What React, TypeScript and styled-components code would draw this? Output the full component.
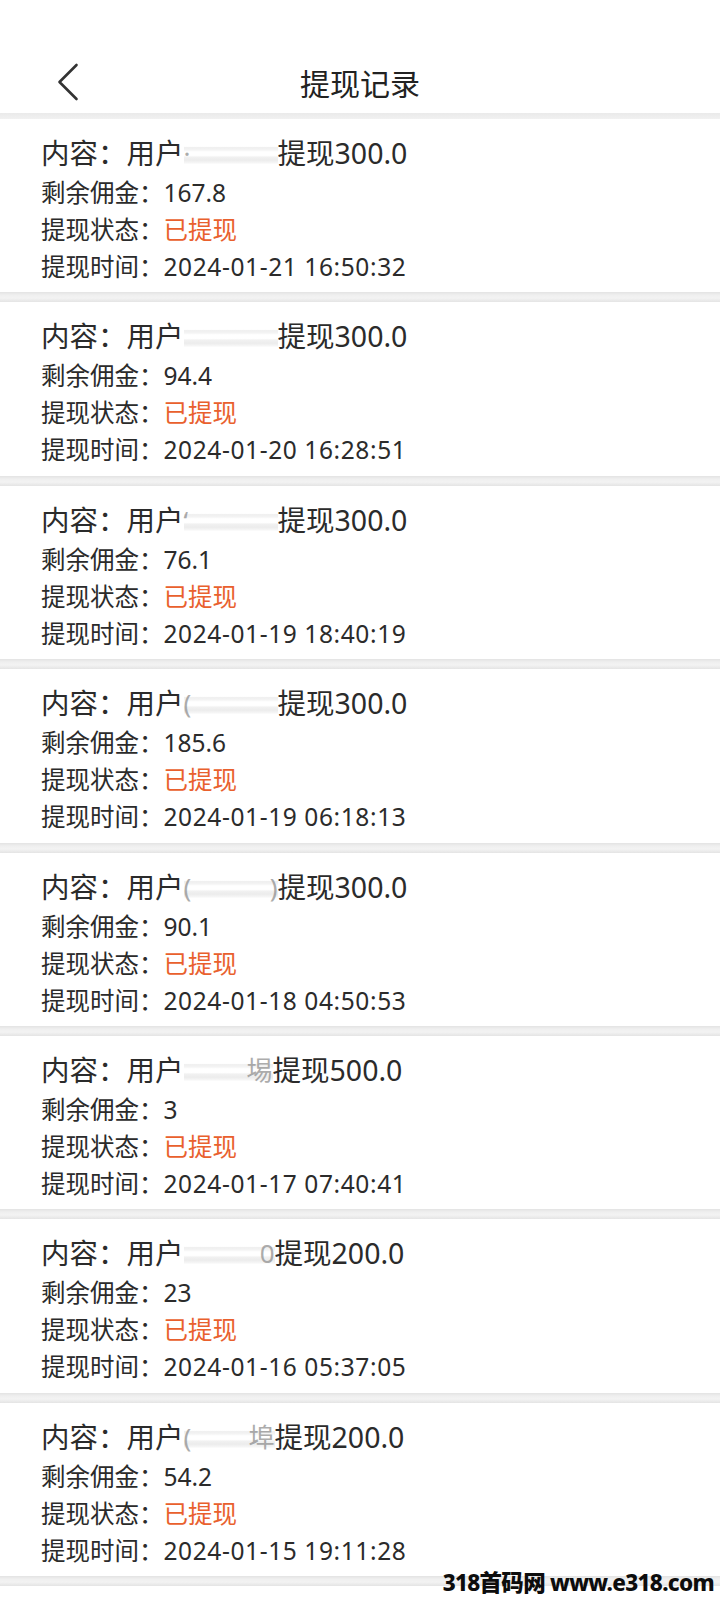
import React from "react";
import styled, { createGlobalStyle } from "styled-components";

const GlobalStyle = createGlobalStyle`
  html, body {
    margin: 0;
    padding: 0;
    background: #ffffff;
  }
  body {
    font-family: "Noto Sans", "Noto Sans CJK SC", sans-serif;
    color: #2b2b2b;
  }
`;

const Page = styled.div`
  position: relative;
  width: 720px;
  background: #ffffff;
  overflow: hidden;
`;

const Header = styled.header`
  padding: 56px 0 5px;
  background: #ffffff;
`;

const Bar = styled.div`
  height: 52px;
  display: grid;
  grid-template-columns: 1fr auto 1fr;
  align-items: center;
`;

const BackButton = styled.button`
  justify-self: start;
  margin-left: 57px;
  padding: 0;
  border: 0;
  background: none;
  display: flex;
  align-items: center;
  cursor: pointer;
`;

const Title = styled.h1`
  margin: 0;
  font-family: "Noto Sans CJK SC", sans-serif;
  font-size: 30px;
  font-weight: 400;
  line-height: 52px;
  color: #222222;
`;

const Band = styled.div<{ $thin?: boolean }>`
  height: ${(p) => (p.$thin ? "6px" : "10px")};
  background: ${(p) =>
    p.$thin
      ? "linear-gradient(#eaeaea, #f1f1f1)"
      : "linear-gradient(#e3e3e3 0%, #efefef 30%, #f3f3f3 60%, #e4e4e4 100%)"};
`;

const Card = styled.section`
  background: #ffffff;
  padding: 14px 0 7.4px 41px;
  box-sizing: border-box;
`;

const ContentLine = styled.div`
  font-size: 28.5px;
  line-height: 40px;
  margin-bottom: 1px;
  white-space: nowrap;
  display: flex;
  align-items: center;
`;

const InfoLine = styled.div`
  font-size: 24.5px;
  line-height: 37px;
  white-space: nowrap;
`;

const Value = styled.span<{ $accent?: boolean; $wide?: boolean }>`
  color: ${(p) => (p.$accent ? "#e9602d" : "#2b2b2b")};
  letter-spacing: ${(p) => (p.$wide ? "0.6px" : "0")};
`;

const Mask = styled.span`
  display: inline-flex;
  justify-content: space-between;
  align-items: center;
  height: 30px;
  background: linear-gradient(
    to bottom,
    transparent 0%,
    transparent 28%,
    #efefef 32%,
    #f4f4f4 40%,
    transparent 46%,
    transparent 58%,
    #f1f1f1 64%,
    #ececec 74%,
    #f5f5f5 82%,
    transparent 88%
  );
`;

const Glimpse = styled.span`
  color: #8a8a8a;
  opacity: 0.7;
  font-size: 26px;
`;

const Watermark = styled.div`
  position: absolute;
  right: 6px;
  top: 1569px;
  font-family: "Noto Sans", "Noto Sans CJK SC", sans-serif;
  font-weight: 800;
  font-size: 22.5px;
  line-height: 28px;
  color: #0d0d0d;
  letter-spacing: -0.7px;
  white-space: nowrap;
`;

type Record = {
  lead: string;
  tail: string;
  w: number;
  amount: string;
  left: string;
  time: string;
};

const records: Record[] = [
  { lead: "·", tail: "", w: 94, amount: "300.0", left: "167.8", time: "2024-01-21 16:50:32" },
  { lead: "", tail: "", w: 94, amount: "300.0", left: "94.4", time: "2024-01-20 16:28:51" },
  { lead: "‘", tail: "", w: 94, amount: "300.0", left: "76.1", time: "2024-01-19 18:40:19" },
  { lead: "(", tail: "", w: 94, amount: "300.0", left: "185.6", time: "2024-01-19 06:18:13" },
  { lead: "(", tail: ")", w: 94, amount: "300.0", left: "90.1", time: "2024-01-18 04:50:53" },
  { lead: "", tail: "埸", w: 89, amount: "500.0", left: "3", time: "2024-01-17 07:40:41" },
  { lead: "", tail: "0", w: 91, amount: "200.0", left: "23", time: "2024-01-16 05:37:05" },
  { lead: "(", tail: "埠", w: 91, amount: "200.0", left: "54.2", time: "2024-01-15 19:11:28" },
];

const BackIcon = () => (
  <svg width="22" height="38" viewBox="0 0 22 38" fill="none">
    <polyline
      points="19.5,2 2.5,19 19.5,36"
      stroke="#333333"
      strokeWidth="2.6"
      strokeLinecap="round"
      strokeLinejoin="round"
    />
  </svg>
);

const RecordCard = ({ r }: { r: Record }) => (
  <>
    <Card>
      <ContentLine>
        <span>内容：用户</span>
        <Mask style={{ width: r.w }}>
          <Glimpse>{r.lead}</Glimpse>
          <Glimpse>{r.tail}</Glimpse>
        </Mask>
        <span>提现{r.amount}</span>
      </ContentLine>
      <InfoLine>
        剩余佣金：<Value>{r.left}</Value>
      </InfoLine>
      <InfoLine>
        提现状态：<Value $accent>已提现</Value>
      </InfoLine>
      <InfoLine>
        提现时间：<Value $wide>{r.time}</Value>
      </InfoLine>
    </Card>
    <Band />
  </>
);

export default function App() {
  return (
    <Page>
      <GlobalStyle />
      <Header>
        <Bar>
          <BackButton aria-label="返回">
            <BackIcon />
          </BackButton>
          <Title>提现记录</Title>
          <span />
        </Bar>
      </Header>
      <Band $thin />
      {records.map((r, i) => (
        <RecordCard key={i} r={r} />
      ))}
      <Card />
      <Watermark>318首码网 www.e318.com</Watermark>
    </Page>
  );
}
